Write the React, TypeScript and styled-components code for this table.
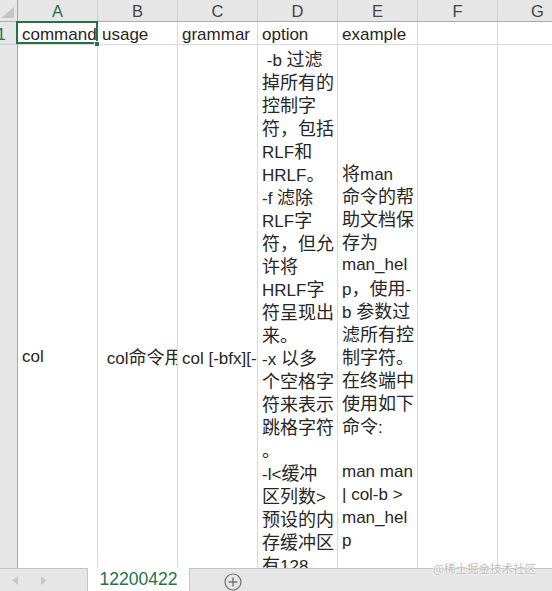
import React from "react";
import styled, { createGlobalStyle, css } from "styled-components";

const GlobalStyle = createGlobalStyle`
  *, *::before, *::after { box-sizing: border-box; }
  html, body { margin: 0; padding: 0; background: #fff; }
  body { overflow: hidden; }
`;

const FONT = `"Liberation Sans", "Noto Sans CJK SC", sans-serif`;
const GREEN = "#217346";

const Page = styled.div`
  width: 552px;
  height: 591px;
  display: flex;
  flex-direction: column;
  overflow: hidden;
  position: relative;
  background: #fff;
  font-family: ${FONT};
`;

const SheetArea = styled.div`
  flex: 1;
  min-height: 0;
  overflow: hidden;
`;

const Grid = styled.div`
  display: grid;
  grid-template-columns: 18px repeat(7, 80px);
  grid-template-rows: 22px 23px 622px;
`;

const Corner = styled.div`
  background: #e6e6e6;
  border-right: 1px solid #a6a6a6;
  border-bottom: 1px solid #ababab;
  display: flex;
  align-items: flex-end;
  justify-content: flex-end;
  padding: 0 3px 3px 0;
`;

const ColHeader = styled.div<{ $active?: boolean }>`
  background: #e6e6e6;
  border-right: 1px solid #cdcdcd;
  border-bottom: 1px solid #ababab;
  display: flex;
  align-items: center;
  justify-content: center;
  padding-top: 2px;
  font-size: 16.5px;
  line-height: 1;
  color: ${(p) => (p.$active ? GREEN : "#444")};
`;

const RowHeader = styled.div<{ $active?: boolean }>`
  background: #e6e6e6;
  border-right: 1px solid #a6a6a6;
  border-bottom: 1px solid #cdcdcd;
  overflow: hidden;
  display: flex;
  justify-content: flex-end;
  align-items: center;
  padding-top: 2px;
  font-size: 16.5px;
  color: ${(p) => (p.$active ? GREEN : "#444")};
`;

const RowLabel = styled.span`
  flex: 0 0 32px;
  text-align: center;
`;

const Cell = styled.div<{ $valign?: "start" | "center"; $selected?: boolean; $head?: boolean }>`
  position: relative;
  min-width: 0;
  border-right: 1px solid #dadada;
  border-bottom: 1px solid #dadada;
  display: flex;
  align-items: ${(p) => (p.$valign === "start" ? "flex-start" : "center")};
  padding-top: ${(p) => (p.$valign === "start" ? "1.5px" : p.$head ? "2px" : "1px")};
  font-size: 17px;
  line-height: 23px;
  color: #262626;
  ${(p) =>
    p.$selected &&
    css`
      &::after {
        content: "";
        position: absolute;
        top: -1px;
        left: -2px;
        right: -1px;
        bottom: 0;
        border: 2px solid ${GREEN};
        pointer-events: none;
        z-index: 2;
      }
      &::before {
        content: "";
        position: absolute;
        right: -3px;
        bottom: -3px;
        width: 6px;
        height: 6px;
        background: ${GREEN};
        border: 1px solid #fff;
        z-index: 3;
      }
    `}
`;

const CellText = styled.div`
  width: 100%;
  padding: 0 4px;
  overflow: hidden;
`;

const Line = styled.div`
  height: 23px;
  line-height: 23px;
  white-space: pre;
`;

const Han = styled.span`
  font-family: "Noto Sans CJK SC", sans-serif;
  font-size: 18px;
`;

const TabBar = styled.div`
  flex: 0 0 23px;
  display: flex;
  background: #e6e6e6;
  border-top: 1px solid #c2c2c2;
`;

const TabNav = styled.div`
  flex: 0 0 88px;
  display: flex;
  align-items: center;
  gap: 23px;
  padding-left: 12px;
  border-right: 1px solid #c6c6c6;
`;

const SheetTab = styled.div`
  flex: 0 0 102px;
  margin-top: -1px;
  background: #fff;
  border-right: 1px solid #c6c6c6;
  display: flex;
  align-items: center;
  justify-content: center;
  font-size: 17.5px;
  color: ${GREEN};
  line-height: 1;
`;

const AddSheet = styled.div`
  flex: 0 0 auto;
  display: flex;
  align-items: center;
  padding-left: 34px;
  padding-top: 4px;
`;

const Watermark = styled.div`
  position: absolute;
  right: 16px;
  bottom: 15px;
  font-family: "Noto Sans CJK SC", sans-serif;
  font-size: 11.5px;
  color: #bdbdbd;
  text-shadow: 0 0 2px #fff, 0 0 1px #fff;
  pointer-events: none;
`;

const HAN_RE = /([\u3000-\u303f\u4e00-\u9fff\uff00-\uffef]+)/;

const Mixed = ({ text }: { text: string }) => (
  <>
    {text.split(HAN_RE).map((part, i) =>
      i % 2 === 1 ? <Han key={i}>{part}</Han> : <React.Fragment key={i}>{part}</React.Fragment>
    )}
  </>
);

const Lines = ({ lines }: { lines: string[] }) => (
  <CellText>
    {lines.map((l, i) => (
      <Line key={i}>
        <Mixed text={l} />
      </Line>
    ))}
  </CellText>
);

const D_LINES = [
  " -b 过滤",
  "掉所有的",
  "控制字",
  "符，包括",
  "RLF和",
  "HRLF。",
  "-f 滤除",
  "RLF字",
  "符，但允",
  "许将",
  "HRLF字",
  "符呈现出",
  "来。",
  "-x 以多",
  "个空格字",
  "符来表示",
  "跳格字符",
  "。",
  "-l<缓冲",
  "区列数>",
  "预设的内",
  "存缓冲区",
  "有128",
  "列，您可",
  "以自行指",
  "定缓冲区",
  "的大小。",
];

const E_LINES = [
  "将man",
  "命令的帮",
  "助文档保",
  "存为",
  "man_hel",
  "p，使用-",
  "b 参数过",
  "滤所有控",
  "制字符。",
  "在终端中",
  "使用如下",
  "命令:",
  "",
  "man man",
  "| col-b >",
  "man_hel",
  "p",
];

const COLS = ["A", "B", "C", "D", "E", "F", "G"];

const CornerMark = () => (
  <svg width="13" height="11" viewBox="0 0 13 11">
    <polygon points="13,0 13,11 0,11" fill="#c4c4c4" />
  </svg>
);

const ArrowLeft = () => (
  <svg width="6" height="9" viewBox="0 0 6 9">
    <polygon points="6,0 6,9 0,4.5" fill="#c8c8c8" />
  </svg>
);

const ArrowRight = () => (
  <svg width="6" height="9" viewBox="0 0 6 9">
    <polygon points="0,0 0,9 6,4.5" fill="#c8c8c8" />
  </svg>
);

const PlusCircle = () => (
  <svg width="18" height="18" viewBox="0 0 18 18">
    <circle cx="9" cy="9" r="8" fill="none" stroke="#6e6e6e" strokeWidth="1.2" />
    <line x1="9" y1="4.5" x2="9" y2="13.5" stroke="#6e6e6e" strokeWidth="1.4" />
    <line x1="4.5" y1="9" x2="13.5" y2="9" stroke="#6e6e6e" strokeWidth="1.4" />
  </svg>
);

export default function App() {
  return (
    <Page>
      <GlobalStyle />
      <SheetArea>
        <Grid>
          <Corner>
            <CornerMark />
          </Corner>
          {COLS.map((c) => (
            <ColHeader key={c} $active={c === "A"}>
              {c}
            </ColHeader>
          ))}

          <RowHeader $active>
            <RowLabel>1</RowLabel>
          </RowHeader>
          <Cell $selected $head>
            <Lines lines={["command"]} />
          </Cell>
          <Cell $head>
            <Lines lines={["usage"]} />
          </Cell>
          <Cell $head>
            <Lines lines={["grammar"]} />
          </Cell>
          <Cell $head>
            <Lines lines={["option"]} />
          </Cell>
          <Cell $head>
            <Lines lines={["example"]} />
          </Cell>
          <Cell />
          <Cell />

          <RowHeader />
          <Cell>
            <Lines lines={["col"]} />
          </Cell>
          <Cell>
            <Lines lines={[" col命令用于过滤控制字符"]} />
          </Cell>
          <Cell>
            <Lines lines={["col [-bfx][-l<缓冲区列数>]"]} />
          </Cell>
          <Cell $valign="start">
            <Lines lines={D_LINES} />
          </Cell>
          <Cell>
            <Lines lines={E_LINES} />
          </Cell>
          <Cell />
          <Cell />
        </Grid>
      </SheetArea>
      <TabBar>
        <TabNav>
          <ArrowLeft />
          <ArrowRight />
        </TabNav>
        <SheetTab>12200422</SheetTab>
        <AddSheet>
          <PlusCircle />
        </AddSheet>
      </TabBar>
      <Watermark>@稀土掘金技术社区</Watermark>
    </Page>
  );
}
